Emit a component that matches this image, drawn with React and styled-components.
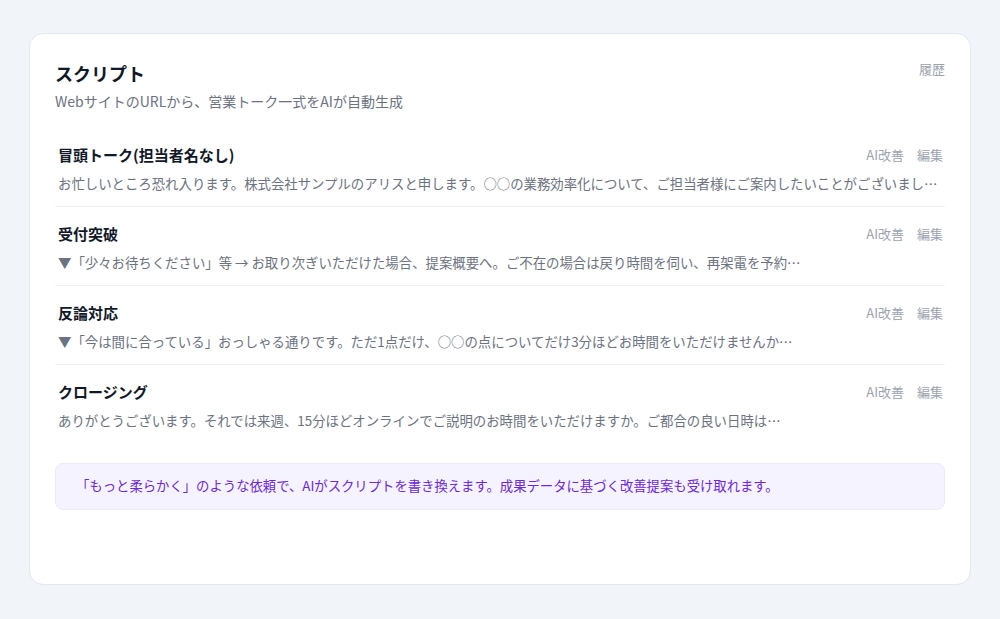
import React from "react";
import styled, { createGlobalStyle } from "styled-components";

const Global = createGlobalStyle`
  html, body { margin: 0; padding: 0; }
  body {
    background: #f1f4f8;
    font-family: "Noto Sans CJK JP", "Noto Sans", sans-serif;
    -webkit-font-smoothing: antialiased;
  }
  * { box-sizing: border-box; }
`;

const Page = styled.div`
  height: 100vh;
  padding: 33px 29px 34px;
  display: flex;
`;

const Card = styled.section`
  flex: 1;
  min-width: 0;
  background: #ffffff;
  border: 1px solid #e3e7ee;
  border-radius: 14px;
  padding: 24px 25px;
  display: flex;
  flex-direction: column;
`;

const Header = styled.header`
  display: flex;
  justify-content: space-between;
  align-items: flex-start;
  margin-bottom: 14px;
`;

const TitleBlock = styled.div`
  display: flex;
  flex-direction: column;
`;

const Title = styled.h1`
  margin: 0;
  font-size: 18px;
  line-height: 30px;
  font-weight: 700;
  color: #111827;
`;

const Subtitle = styled.p`
  margin: 0;
  font-size: 14px;
  line-height: 26px;
  color: #6b7280;
`;

const LinkButton = styled.button`
  border: none;
  background: none;
  padding: 0;
  font-family: inherit;
  font-size: 13px;
  line-height: 20px;
  color: #9ca3af;
  cursor: pointer;
`;

const HistoryButton = styled(LinkButton)`
  margin-top: 1px;
`;

const List = styled.div`
  display: flex;
  flex-direction: column;
  min-width: 0;
`;

const Row = styled.div`
  min-width: 0;
  padding: 16px 2px 13px 3px;
  border-bottom: ${(p) => (p.$last ? "none" : "1px solid #eef0f3")};
  display: flex;
  flex-direction: column;
  gap: 7px;
`;

const RowHead = styled.div`
  display: flex;
  justify-content: space-between;
  align-items: center;
`;

const RowTitle = styled.h2`
  margin: 0;
  font-size: 15px;
  line-height: 22px;
  font-weight: 700;
  color: #111827;
`;

const Actions = styled.div`
  display: flex;
  gap: 13px;
`;

const RowText = styled.p`
  margin: 0;
  font-size: 13.4px;
  line-height: 20px;
  color: #6b7280;
  white-space: nowrap;
  overflow: hidden;
  text-overflow: ellipsis;
`;

const Callout = styled.div`
  margin-top: 20px;
  background: #f5f3ff;
  border: 1px solid #ede9fe;
  border-radius: 8px;
  padding: 12px 20px 13px;
  font-size: 13.35px;
  line-height: 20px;
  color: #6d28d9;
`;

const rows = [
  {
    title: "冒頭トーク(担当者名なし)",
    text: "お忙しいところ恐れ入ります。株式会社サンプルのアリスと申します。○○の業務効率化について、ご担当者様にご案内したいことがございまし…",
  },
  {
    title: "受付突破",
    text: "▼「少々お待ちください」等 → お取り次ぎいただけた場合、提案概要へ。ご不在の場合は戻り時間を伺い、再架電を予約…",
  },
  {
    title: "反論対応",
    text: "▼「今は間に合っている」おっしゃる通りです。ただ1点だけ、○○の点についてだけ3分ほどお時間をいただけませんか…",
  },
  {
    title: "クロージング",
    text: "ありがとうございます。それでは来週、15分ほどオンラインでご説明のお時間をいただけますか。ご都合の良い日時は…",
  },
];

export default function App() {
  return (
    <>
      <Global />
      <Page>
        <Card>
          <Header>
            <TitleBlock>
              <Title>スクリプト</Title>
              <Subtitle>WebサイトのURLから、営業トーク一式をAIが自動生成</Subtitle>
            </TitleBlock>
            <HistoryButton>履歴</HistoryButton>
          </Header>
          <List>
            {rows.map((r, i) => (
              <Row key={r.title} $last={i === rows.length - 1}>
                <RowHead>
                  <RowTitle>{r.title}</RowTitle>
                  <Actions>
                    <LinkButton>AI改善</LinkButton>
                    <LinkButton>編集</LinkButton>
                  </Actions>
                </RowHead>
                <RowText>{r.text}</RowText>
              </Row>
            ))}
          </List>
          <Callout>
            「もっと柔らかく」のような依頼で、AIがスクリプトを書き換えます。成果データに基づく改善提案も受け取れます。
          </Callout>
        </Card>
      </Page>
    </>
  );
}
